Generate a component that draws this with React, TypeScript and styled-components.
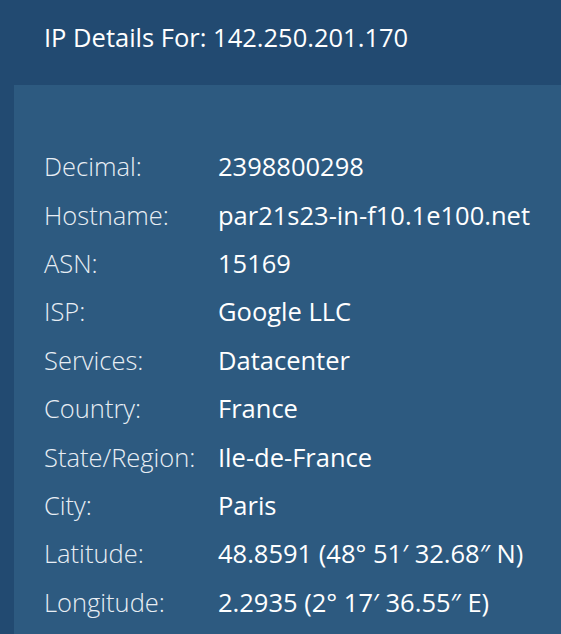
import React from "react";
import styled, { createGlobalStyle } from "styled-components";

const Global = createGlobalStyle`
  html, body { margin: 0; padding: 0; background: #224a71; }
  body { font-family: "Open Sans", "Noto Sans", sans-serif; }
`;

const Page = styled.div`
  height: 634px;
  background: #224a71;
  overflow: hidden;
`;

const Header = styled.h1`
  margin: 0;
  height: 85px;
  box-sizing: border-box;
  padding: 19px 0 0 44px;
  font-size: 25.5px;
  line-height: 36px;
  font-weight: 400;
  color: #ffffff;
`;

const Panel = styled.div`
  margin-left: 14px;
  background: #2d5a80;
  padding: 57px 0 0 30px;
  height: 549px;
  box-sizing: border-box;
`;

const Grid = styled.dl`
  margin: 0;
  display: grid;
  grid-template-columns: 174px 1fr;
  grid-auto-rows: 48.4px;
  align-items: center;
`;

const Label = styled.dt`
  font-size: 25.5px;
  font-weight: 300;
  color: #e8eef4;
`;

const Value = styled.dd`
  margin: 0;
  font-size: 25.5px;
  color: #ffffff;
  white-space: nowrap;
`;

const rows: [string, string][] = [
  ["Decimal:", "2398800298"],
  ["Hostname:", "par21s23-in-f10.1e100.net"],
  ["ASN:", "15169"],
  ["ISP:", "Google LLC"],
  ["Services:", "Datacenter"],
  ["Country:", "France"],
  ["State/Region:", "Ile-de-France"],
  ["City:", "Paris"],
  ["Latitude:", "48.8591 (48° 51′ 32.68″ N)"],
  ["Longitude:", "2.2935 (2° 17′ 36.55″ E)"],
];

export default function App() {
  return (
    <Page>
      <Global />
      <Header>IP Details For: 142.250.201.170</Header>
      <Panel>
        <Grid>
          {rows.map(([l, v]) => (
            <React.Fragment key={l}>
              <Label>{l}</Label>
              <Value>{v}</Value>
            </React.Fragment>
          ))}
        </Grid>
      </Panel>
    </Page>
  );
}
